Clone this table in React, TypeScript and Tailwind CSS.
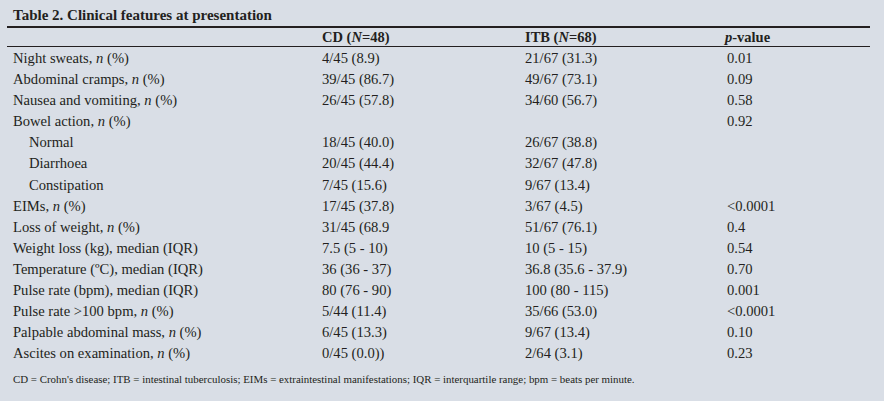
import React from "react";

type Row = { label: React.ReactNode; cd: string; itb: string; p: string; indent?: boolean };

const N = () => <i>n</i>;

const rows: Row[] = [
  { label: <>Night sweats, <N /> (%)</>, cd: "4/45 (8.9)", itb: "21/67 (31.3)", p: "0.01" },
  { label: <>Abdominal cramps, <N /> (%)</>, cd: "39/45 (86.7)", itb: "49/67 (73.1)", p: "0.09" },
  { label: <>Nausea and vomiting, <N /> (%)</>, cd: "26/45 (57.8)", itb: "34/60 (56.7)", p: "0.58" },
  { label: <>Bowel action, <N /> (%)</>, cd: "", itb: "", p: "0.92" },
  { label: "Normal", cd: "18/45 (40.0)", itb: "26/67 (38.8)", p: "", indent: true },
  { label: "Diarrhoea", cd: "20/45 (44.4)", itb: "32/67 (47.8)", p: "", indent: true },
  { label: "Constipation", cd: "7/45 (15.6)", itb: "9/67 (13.4)", p: "", indent: true },
  { label: <>EIMs, <N /> (%)</>, cd: "17/45 (37.8)", itb: "3/67 (4.5)", p: "<0.0001" },
  { label: <>Loss of weight, <N /> (%)</>, cd: "31/45 (68.9", itb: "51/67 (76.1)", p: "0.4" },
  { label: "Weight loss (kg), median (IQR)", cd: "7.5 (5 - 10)", itb: "10 (5 - 15)", p: "0.54" },
  { label: "Temperature (ºC), median (IQR)", cd: "36 (36 - 37)", itb: "36.8 (35.6 - 37.9)", p: "0.70" },
  { label: "Pulse rate (bpm), median (IQR)", cd: "80 (76 - 90)", itb: "100 (80 - 115)", p: "0.001" },
  { label: <>Pulse rate &gt;100 bpm, <N /> (%)</>, cd: "5/44 (11.4)", itb: "35/66 (53.0)", p: "<0.0001" },
  { label: <>Palpable abdominal mass, <N /> (%)</>, cd: "6/45 (13.3)", itb: "9/67 (13.4)", p: "0.10" },
  { label: <>Ascites on examination, <N /> (%)</>, cd: "0/45 (0.0))", itb: "2/64 (3.1)", p: "0.23" },
];

export default function App() {
  return (
    <div
      className="w-[884px] h-[401px] bg-[#d9dee6] text-[#231f20] overflow-hidden"
      style={{ fontFamily: '"Liberation Serif", "Times New Roman", serif' }}
    >
      <div className="pl-[13px] pt-[6px] h-[26px] text-[15px] font-bold leading-[18px]">
        Table 2. Clinical features at presentation
      </div>
      <div className="ml-[7px] w-[863px] border-t-2 border-[#231f20]">
        <div className="grid grid-cols-[309px_203px_200px_1fr] pl-[6px] h-[19px] text-[14.5px] font-bold leading-[19px] border-b border-[#231f20]">
          <div></div>
          <div>CD (<i>N</i>=48)</div>
          <div>ITB (<i>N</i>=68)</div>
          <div><i>p</i>-value</div>
        </div>
        <div className="pt-[1px]">
          {rows.map((r, i) => (
            <div
              key={i}
              className="grid grid-cols-[309px_203px_200px_1fr] pl-[6px] h-[21.1px] text-[14.6px] leading-[21px]"
            >
              <div className={r.indent ? "pl-[16px]" : ""}>{r.label}</div>
              <div>{r.cd}</div>
              <div>{r.itb}</div>
              <div className="pl-[2px]">{r.p}</div>
            </div>
          ))}
        </div>
      </div>
      <div className="pl-[13px] pt-[8px] text-[10.9px] leading-[14px]">
        CD = Crohn's disease; ITB = intestinal tuberculosis; EIMs = extraintestinal manifestations; IQR = interquartile range; bpm = beats per minute.
      </div>
    </div>
  );
}
